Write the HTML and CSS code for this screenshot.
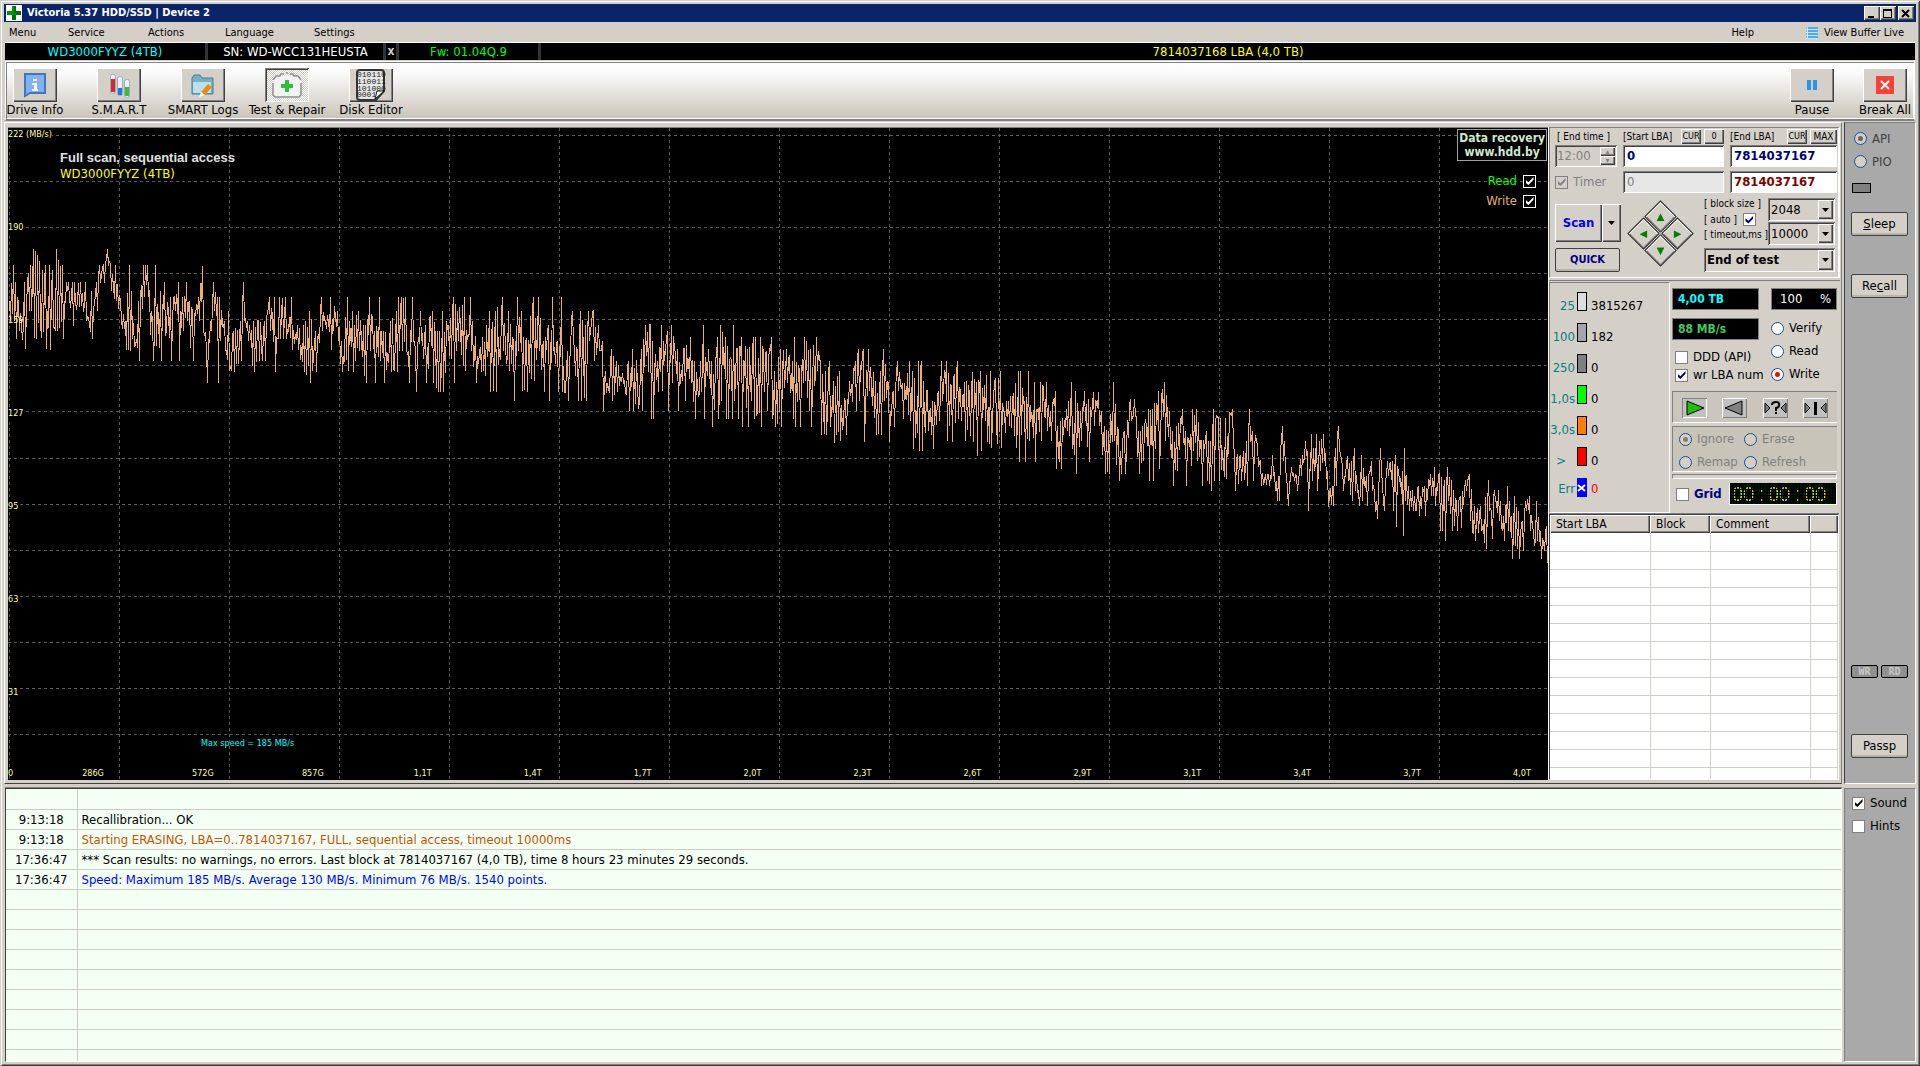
FILE: index.html
```html
<!DOCTYPE html>
<html lang="en">
<head>
<meta charset="utf-8">
<title>Victoria 5.37 HDD/SSD | Device 2</title>
<link rel="stylesheet" href="styles.css">
</head>
<body>
<div class="window">
  <header class="titlebar">
    <svg class="app-icon" viewBox="0 0 16 16"><rect width="16" height="16" fill="#fff"/><path d="M6 1h4v5h5v4h-5v5H6v-5H1V6h5z" fill="#009a00"/><path d="M8 1h2v5h5v2H8zM10 8h5v2h-5zM6 10h4v5H6z" fill="#007000"/></svg>
    <h1>Victoria 5.37 HDD/SSD | Device 2</h1>
    <div class="win-buttons">
      <button aria-label="Minimize"><svg viewBox="0 0 15 13"><path d="M4 9h6v2H4z"/></svg></button>
      <button aria-label="Maximize"><svg viewBox="0 0 15 13"><path d="M3 2h9v9H3zm1 2v6h7V4z" fill-rule="evenodd"/></svg></button>
      <button class="close" aria-label="Close"><svg viewBox="0 0 15 13"><path d="M4 3l7 7M11 3l-7 7" stroke="#000" stroke-width="2"/></svg></button>
    </div>
  </header>

  <nav class="menu">
    <a href="#">Menu</a><a href="#">Service</a><a href="#">Actions</a><a href="#">Language</a><a href="#">Settings</a>
    <a href="#" class="help">Help</a>
    <a href="#" class="live"><svg viewBox="0 0 12 12"><path d="M0 0h12v12H0z" fill="#cfe6fb"/><path d="M2 1h10M2 4h10M2 7h10M2 10h10" stroke="#2196f3" stroke-width="1.5"/><path d="M0 1h1M0 4h1M0 7h1M0 10h1" stroke="#2196f3"/></svg>View Buffer Live</a>
  </nav>

  <div class="device">
    <span class="model">WD3000FYYZ (4TB)</span>
    <span class="serial">SN: WD-WCC131HEUSTA</span>
    <button class="drop" aria-label="Hide serial">x</button>
    <span class="firmware">Fw: 01.04Q.9</span>
    <span class="lba">7814037168 LBA (4,0 TB)</span>
  </div>

  <div class="toolbar">
    <button class="tool"><span class="face"><svg viewBox="0 0 24 28"><path d="M2 3h20v19H7l-5 3z" fill="#7fb3f5" stroke="#4476bb" stroke-width="2"/><path d="M10 8h4v2h-4zM9 12h5v6h1v2H9v-2h2v-4H9z" fill="#f5f5f5"/></svg></span>Drive Info</button>
    <button class="tool"><span class="face"><svg viewBox="0 0 24 28"><g fill="#eef" stroke="#9ab" ><rect x="3.500" y="3.500" width="5" height="19" rx="2"/><rect x="10.500" y="5.500" width="5" height="19" rx="2"/><rect x="17.500" y="8.500" width="5" height="18" rx="2"/></g><path d="M4 8h4v13H4z" fill="#d42c22"/><path d="M11 17h4v7h-4z" fill="#2475e8"/><path d="M18 16h4v9h-4z" fill="#35c035"/></svg></span>S.M.A.R.T</button>
    <button class="tool"><span class="face"><svg viewBox="0 0 24 28"><path d="M1 7l2-3h6l2 3h11v16H1z" fill="#78afc5" stroke="#417d97"/><path d="M2 11h18v11H2z" fill="#bde0ec"/><path d="M17 13l4 3-7 8-4-3z" fill="#f48810"/><path d="M10 21l4 3-6 2z" fill="#fff"/></svg></span>SMART Logs</button>
    <button class="tool active"><span class="face"><svg class="wide" viewBox="0 0 30 28"><path d="M4 5h22l3 3v16l-2 2H3l-2-2V8z" fill="#f2f2f2"/><path d="M1 9l3-4h4l1-2h3M14 2h2M18 3h3l1 2h4l3 4M1 12v12l2 2h24l2-2V12" fill="none" stroke="#909090" stroke-width="1.500"/><path d="M13 9h4v4h4v4h-4v4h-4v-4H9v-4h4z" fill="#2ebd3d"/></svg></span>Test &amp; Repair</button>
    <button class="tool"><span class="face"><svg class="full" viewBox="0 0 30 32"><path d="M4 1h21q3 0 3 3v18l-8 9H4q-3 0-3-3V4q0-3 3-3z" fill="#e6e6e6" stroke="#333" stroke-width="2"/><path d="M28 22h-7l-2 8z" fill="#fff" stroke="#111"/><g font-family="Liberation Mono, monospace" font-size="8" fill="#222"><text x="1" y="8">010110</text><text x="1" y="15">110011</text><text x="1" y="22">101000</text><text x="1" y="28">0001</text></g></svg></span>Disk Editor</button>
    <button class="tool pause"><span class="face"><svg viewBox="0 0 24 28"><path d="M7 9h4v10H7zM13 9h4v10h-4z" fill="#2196f3"/></svg></span>Pause</button>
    <button class="tool"><span class="face"><svg viewBox="0 0 24 28"><path d="M3 5h18v18H3z" fill="#f44336"/><path d="M8 10l8 8M16 10l-8 8" stroke="#fff" stroke-width="2"/></svg></span>Break All</button>
  </div>

  <main class="middle">
    <div class="work">
      <section class="chart">
        <svg class="plot" viewBox="8 128 1540 651" preserveAspectRatio="none" aria-label="Speed graph"><g id="grid"></g><path id="trace"/></svg>
        <div class="y-axis"><span>222 (MB/s)</span><span>190</span><span>159</span><span>127</span><span>95</span><span>63</span><span>31</span></div>
        <span class="origin">0</span>
        <div class="x-axis"><span>286G</span><span>572G</span><span>857G</span><span>1,1T</span><span>1,4T</span><span>1,7T</span><span>2,0T</span><span>2,3T</span><span>2,6T</span><span>2,9T</span><span>3,1T</span><span>3,4T</span><span>3,7T</span><span>4,0T</span></div>
        <div class="caption"><strong>Full scan, sequential access</strong><span>WD3000FYYZ (4TB)</span></div>
        <span class="max">Max speed = 185 MB/s</span>
        <div class="overlay">
          <a href="#" class="banner">Data recovery<br>www.hdd.by</a>
          <label class="read">Read <input type="checkbox" checked></label>
          <label class="write">Write <input type="checkbox" checked></label>
        </div>
      </section>

      <aside class="controls">
        <section class="range">
          <div class="range-grid">
            <label class="small" for="endtime">[ End time ]</label>
            <div class="head"><label class="small" for="start">[Start LBA]</label><button class="mini">CUR</button><button class="mini">0</button></div>
            <div class="head"><label class="small" for="end">[End LBA]</label><button class="mini">CUR</button><button class="mini max-btn">MAX</button></div>
            <div class="spin"><input id="endtime" type="text" value="12:00" disabled><div><button disabled aria-label="Up">▴</button><button disabled aria-label="Down">▾</button></div></div>
            <input id="start" class="field" type="text" value="0">
            <input id="end" class="field" type="text" value="7814037167">
            <label class="check disabled"><input type="checkbox" checked disabled>Timer</label>
            <input class="field off" type="text" value="0" disabled aria-label="Current start">
            <input class="field red" type="text" value="7814037167" aria-label="Current end">
          </div>
          <div class="actions">
            <div class="scan-col">
              <div class="scan"><button>Scan</button><button class="arrow" aria-label="Scan options"></button></div>
              <button class="quick">QUICK</button>
            </div>
            <div class="diamond">
              <button aria-label="Up"><i class="up"></i></button><button aria-label="Right"><i class="right"></i></button><button aria-label="Left"><i class="left"></i></button><button aria-label="Down"><i class="down"></i></button>
            </div>
            <div class="options">
              <div class="block-labels">
                <label class="small" for="block">[ block size ]</label>
                <label class="small auto">[ auto ] <input type="checkbox" checked></label>
                <label class="small" for="timeout">[ timeout,ms ]</label>
              </div>
              <div class="block-values">
                <span class="combo"><select id="block"><option>2048</option></select></span>
                <span class="combo"><select id="timeout"><option>10000</option></select></span>
              </div>
              <span class="combo finish"><select aria-label="After scan"><option>End of test</option></select></span>
            </div>
          </div>
        </section>

        <section class="status">
          <dl class="legend">
            <div><dt>25</dt><dd><i class="b25"></i>3815267</dd></div>
            <div><dt>100</dt><dd><i class="b100"></i>182</dd></div>
            <div><dt>250</dt><dd><i class="b250"></i>0</dd></div>
            <div><dt>1,0s</dt><dd><i class="b1s"></i>0</dd></div>
            <div><dt>3,0s</dt><dd><i class="b3s"></i>0</dd></div>
            <div class="over"><dt>&gt;</dt><dd><i class="bover"></i>0</dd></div>
            <div class="err"><dt>Err</dt><dd><i class="berr"><svg viewBox="0 0 10 18"><path d="M1 7l7 6M8 7l-7 6" stroke="#fff" stroke-width="2"/></svg></i>0</dd></div>
          </dl>
          <div class="run">
            <div class="meters">
              <div class="left-col">
                <output class="lcd cyan">4,00 TB</output>
                <output class="lcd green">88 MB/s</output>
                <label class="check"><input type="checkbox">DDD (API)</label>
                <label class="check"><input type="checkbox" checked>wr LBA num</label>
              </div>
              <div class="right-col">
                <output class="lcd percent"><span>100</span><span>%</span></output>
                <label class="radio"><input type="radio" name="mode">Verify</label>
                <label class="radio"><input type="radio" name="mode">Read</label>
                <label class="radio"><input type="radio" name="mode" checked>Write</label>
              </div>
            </div>
            <div class="transport">
              <button class="on" aria-label="Forward"><svg viewBox="0 0 25 20"><path d="M5 3v14l17-7z" fill="#1fbf00" stroke="#000"/></svg></button>
              <button aria-label="Backward"><svg viewBox="0 0 25 20"><path d="M20 3v14L3 10z" fill="#808080" stroke="#000"/></svg></button>
              <button aria-label="Random"><svg viewBox="0 0 25 20"><path d="M2 5v10l5-5zM23 5v10l-5-5z" fill="#808080" stroke="#000"/><path d="M9 7q0-3 4-3t3 4q-1 2-3 2v3M13 14v2" fill="none" stroke="#000" stroke-width="2"/></svg></button>
              <button aria-label="Butterfly"><svg viewBox="0 0 25 20"><path d="M2 5v10l5-5zM23 5v10l-5-5z" fill="#808080" stroke="#000"/><path d="M11 4h3v13h-3z"/></svg></button>
            </div>
            <fieldset class="defects">
              <label class="radio"><input type="radio" name="defect" checked disabled>Ignore</label>
              <label class="radio"><input type="radio" name="defect" disabled>Erase</label>
              <label class="radio"><input type="radio" name="defect" disabled>Remap</label>
              <label class="radio"><input type="radio" name="defect" disabled>Refresh</label>
            </fieldset>
            <div class="rule"></div>
            <div class="grid-row">
              <label class="check"><input type="checkbox"><b>Grid</b></label>
              <time class="led"><span>00</span><span>:</span><span>00</span><span>:</span><span>00</span></time>
            </div>
          </div>
        </section>

        <div class="list">
          <table>
            <thead><tr><th>Start LBA</th><th>Block</th><th>Comment</th><th></th></tr></thead>
            <tbody>
              <tr><td></td><td></td><td></td><td></td></tr><tr><td></td><td></td><td></td><td></td></tr>
              <tr><td></td><td></td><td></td><td></td></tr><tr><td></td><td></td><td></td><td></td></tr>
              <tr><td></td><td></td><td></td><td></td></tr><tr><td></td><td></td><td></td><td></td></tr>
              <tr><td></td><td></td><td></td><td></td></tr><tr><td></td><td></td><td></td><td></td></tr>
              <tr><td></td><td></td><td></td><td></td></tr><tr><td></td><td></td><td></td><td></td></tr>
              <tr><td></td><td></td><td></td><td></td></tr><tr><td></td><td></td><td></td><td></td></tr>
              <tr><td></td><td></td><td></td><td></td></tr><tr><td></td><td></td><td></td><td></td></tr>
            </tbody>
          </table>
        </div>
      </aside>
    </div>

    <aside class="side">
      <label class="radio"><input type="radio" name="bus" checked disabled>API</label>
      <label class="radio"><input type="radio" name="bus" disabled>PIO</label>
      <i class="lamp"></i>
      <button class="push sleep"><u>S</u>leep</button>
      <button class="push recall">Re<u>c</u>all</button>
      <div class="lamps"><span>WR</span><span>RD</span></div>
      <button class="push">Passp</button>
    </aside>
  </main>

  <footer class="bottom">
    <div class="log">
      <table>
        <tbody>
          <tr><td></td><td></td></tr>
          <tr><td>9:13:18</td><td>Recallibration... OK</td></tr>
          <tr class="start"><td>9:13:18</td><td>Starting ERASING, LBA=0..7814037167, FULL, sequential access, timeout 10000ms</td></tr>
          <tr><td>17:36:47</td><td>*** Scan results: no warnings, no errors. Last block at 7814037167 (4,0 TB), time 8 hours 23 minutes 29 seconds.</td></tr>
          <tr class="speed"><td>17:36:47</td><td>Speed: Maximum 185 MB/s. Average 130 MB/s. Minimum 76 MB/s. 1540 points.</td></tr>
          <tr><td></td><td></td></tr><tr><td></td><td></td></tr><tr><td></td><td></td></tr>
          <tr><td></td><td></td></tr><tr><td></td><td></td></tr><tr><td></td><td></td></tr>
          <tr><td></td><td></td></tr><tr><td></td><td></td></tr><tr><td></td><td></td></tr>
        </tbody>
      </table>
    </div>
    <div class="prefs">
      <label class="check"><input type="checkbox" checked>Sound</label>
      <label class="check"><input type="checkbox">Hints</label>
    </div>
  </footer>
</div>
<script src="chart.js"></script>
</body>
</html>
```
FILE: styles.css
```css
* { box-sizing: border-box; }
:root {
  --face: #d4d0c8;
  --shade: #808080;
  --dark: #404040;
  --raised: inset 1px 1px #fff, inset -1px -1px var(--dark), inset -2px -2px var(--shade);
  --sunken: inset 1px 1px var(--shade), inset -1px -1px #fff, inset 2px 2px var(--dark);
}
body {
  margin: 0;
  background: var(--face);
  color: #000;
  font: 13px/16px "DejaVu Sans Condensed", "DejaVu Sans", sans-serif;
  font-stretch: condensed;
}
button, input, select {
  margin: 0;
  padding: 0;
  border: 0;
  border-radius: 0;
  background: none;
  color: inherit;
  font: inherit;
}
button { background: var(--face); box-shadow: var(--raised); white-space: nowrap; }
a { color: inherit; text-decoration: none; }
svg { display: block; }

.window {
  min-height: 100vh;
  display: flex;
  flex-direction: column;
  padding: 4px;
  box-shadow: inset 1px 1px var(--face), inset -1px -1px var(--dark), inset 2px 2px #fff, inset -2px -2px var(--shade);
}

.titlebar { display: flex; align-items: center; height: 18px; padding: 0 2px; background: #0a246a; color: #fff; }
.titlebar h1 { margin: 0 auto 0 5px; font-size: 11px; line-height: 16px; font-weight: 700; }
.app-icon { width: 16px; height: 16px; }
.win-buttons { display: flex; }
.win-buttons button { width: 16px; height: 14px; }
.win-buttons .close { margin-left: 2px; }
.win-buttons svg { width: 15px; height: 13px; }

.menu { display: flex; align-items: center; height: 20px; padding: 1px 12px 0 5px; font-size: 11px; }
.menu a { width: 82px; }
.menu a:first-child { width: 59px; }
.menu a:nth-child(2) { width: 80px; }
.menu a:nth-child(3) { width: 77px; }
.menu a:nth-child(4) { width: 89px; }
.menu .help { width: auto; margin-left: auto; margin-right: 52px; }
.menu .live { display: flex; align-items: center; gap: 6px; width: auto; }
.menu svg { width: 12px; height: 12px; }

.device { display: flex; height: 18px; margin: 0 1px; border-top: 1px solid #fff; background: #000; line-height: 17px; text-align: center; }
.device span, .device button { border-right: 3px solid #333; }
.model { width: 203px; color: #0ff; }
.serial { width: 178px; color: #fff; }
.device .drop { width: 13px; background: #000; box-shadow: none; color: #ccc; font-weight: 700; font-size: 12px; }
.firmware { width: 142px; color: #0f0; }
.device .lba { flex: 1; border: 0; color: #ff0; }

.toolbar {
  display: flex;
  gap: 26px;
  height: 60px;
  margin: 1px 1px 0;
  padding: 6px 0 0 8px;
  border: 1px solid #fff;
  border-bottom: 2px solid var(--shade);
  background: linear-gradient(#fff, #fafafa 20%, #c8c4b8);
  box-shadow: inset 1px 1px var(--shade), inset -1px -1px #fff;
}
.tool { display: flex; flex-direction: column; align-items: center; width: 60px; margin: 0 -1px; padding: 0; background: none; box-shadow: none; }
.toolbar .tool:first-child { margin-left: -9px; }
.tool .face { display: flex; align-items: center; justify-content: center; width: 44px; height: 34px; background: var(--face); box-shadow: var(--raised); }
.tool.active .face { background: repeating-conic-gradient(#fff 0 25%, var(--face) 0 50%) 0 0 / 2px 2px; box-shadow: var(--sunken); }
.tool svg { width: 24px; height: 28px; }
.tool svg.wide { width: 30px; }
.tool svg.full { width: 30px; height: 32px; }
.tool.pause { margin-left: auto; margin-right: -12px; }

.middle { flex: 1; display: flex; gap: 2px; margin-top: 1px; min-height: 640px; }
.work {
  flex: 1;
  display: flex;
  min-width: 0;
  padding: 4px 1px 3px 3px;
  border: 1px solid #fff;
  border-bottom-color: var(--dark);
  border-right-color: var(--shade);
}

.chart { position: relative; flex: 1; min-width: 0; border-top: 1px solid var(--shade); background: #000; font-size: 9px; line-height: 12px; color: #ffffa0; }
.plot { position: absolute; inset: 0; width: 100%; height: 100%; }
.plot line { stroke: #5a5a5a; stroke-dasharray: 3 3; vector-effect: non-scaling-stroke; shape-rendering: crispEdges; }
#trace { fill: none; stroke: #e8ae72; vector-effect: non-scaling-stroke; shape-rendering: crispEdges; }
.y-axis { position: absolute; top: 0; left: 0; height: 87.5%; display: flex; flex-direction: column; justify-content: space-between; align-items: flex-start; }
.y-axis span { background: #000; }
.y-axis span:nth-child(3) { background: none; }
.origin { position: absolute; left: 0; bottom: 1px; }
.x-axis { position: absolute; left: 67px; right: 8px; bottom: 1px; display: flex; justify-content: space-between; text-align: center; }
.x-axis span { width: 36px; }
.caption { position: absolute; left: 52px; top: 22px; display: grid; color: #ff0; font-size: 13px; line-height: 16px; }
.caption strong { color: #e0e0e0; font-family: "Liberation Sans", sans-serif; }
.max { position: absolute; left: 193px; bottom: 31px; color: #0ff; }
.overlay { position: absolute; top: 1px; right: 1px; display: flex; flex-direction: column; align-items: flex-end; color: #0f0; font-size: 13px; }
.banner { margin-bottom: 10px; padding: 1px 1px; border: 1px solid #a0a0a0; background: #000; color: #cfe8cf; font-size: 12px; line-height: 14px; font-weight: 700; text-align: center; }
.overlay label { display: flex; gap: 6px; align-items: center; height: 20px; margin-right: 11px; }
.overlay .write { color: #e8ae72; }

input[type=checkbox] {
  appearance: none;
  flex: none;
  display: grid;
  place-items: center;
  width: 13px;
  height: 13px;
  background: #fff;
  color: #000080;
  border: 1px solid var(--shade);
}
input[type=checkbox]:checked::before { content: ""; width: 8px; height: 8px; background: currentColor; clip-path: polygon(0 35%, 37% 65%, 100% 0, 100% 35%, 37% 100%, 0 72%); }
input[type=checkbox]:disabled { background: none; color: var(--shade); }
.overlay input[type=checkbox] { border-color: #fff; background: #000; color: #fff; }
.prefs input[type=checkbox] { color: #000; }
input[type=radio] { appearance: none; flex: none; display: grid; place-items: center; width: 13px; height: 13px; border: 1px solid #1c4f86; border-radius: 50%; background: #fff; }
input[type=radio]:checked::before { content: ""; width: 5px; height: 5px; border-radius: 50%; background: #f00; }
input[type=radio]:disabled { background: var(--face); }
input[type=radio]:disabled::before { background: var(--shade); }
.check, .radio { display: flex; align-items: center; gap: 5px; white-space: nowrap; }
.disabled { color: var(--shade); }

.controls { display: flex; flex-direction: column; width: 292px; border-left: 1px solid #fff; }
.small { font-size: 10px; line-height: 12px; white-space: nowrap; }
.range { height: 151px; padding: 1px 3px 0 5px; border: 1px solid var(--shade); border-right: 2px solid #fff; border-bottom-color: #fff; box-shadow: 0 2px var(--face), 0 3px var(--shade); }
.range-grid { display: grid; grid-template-columns: 62px 101px 107px; grid-template-rows: 15px 24px 28px; column-gap: 6px; align-items: center; }
.range-grid > label.small { padding-left: 2px; }
.head { display: flex; align-items: center; gap: 3px; height: 15px; }
.head label { margin-right: auto; }
.mini { width: 20px; height: 15px; font-size: 9px; line-height: 15px; overflow: hidden; }
.max-btn { width: 27px; font-size: 10px; }
.field { width: 100%; height: 22px; padding: 0 4px 2px; background: #fff; box-shadow: var(--sunken); color: #000080; font-weight: 700; line-height: 18px; }
.field.red { color: #800000; }
.field.off { background: #e6e6e6; color: var(--shade); font-weight: 400; }
.spin { display: flex; height: 22px; padding: 2px; box-shadow: var(--sunken); color: var(--shade); }
.spin input { flex: 1; min-width: 0; }
.spin button { display: block; width: 15px; height: 9px; font-size: 8px; line-height: 8px; }

.actions { display: flex; justify-content: space-between; padding-top: 2px; }
.scan-col { display: flex; flex-direction: column; gap: 6px; padding-top: 6px; }
.scan { display: flex; height: 38px; color: #00f; font-weight: 700; }
.scan button:first-child { width: 47px; }
.scan .arrow { width: 19px; display: grid; place-items: center; }
.arrow::before, .combo::after { content: ""; background: #000; clip-path: polygon(0 0, 100% 0, 50% 100%); width: 7px; height: 4px; }
.quick { width: 65px; height: 24px; border: 1px solid var(--dark); border-radius: 2px; box-shadow: inset 0 -2px #b8b4a4; color: #000080; font-size: 11px; font-weight: 700; }
.diamond { display: grid; grid-template-columns: 23px 23px; gap: 1px; width: 47px; height: 47px; margin: 12px 6px 0 2px; transform: rotate(45deg); }
.diamond button { display: grid; place-items: center; border: 1px solid #222; box-shadow: inset 1px 1px #fff, inset -1px -1px var(--shade); }
.diamond i { width: 8px; height: 8px; background: #008000; clip-path: polygon(50% 0, 100% 100%, 0 100%); transform: rotate(-45deg); }
.diamond .right { transform: rotate(45deg); }
.diamond .left { transform: rotate(225deg); }
.diamond .down { transform: rotate(135deg); }
.options { display: grid; grid-template-columns: 64px 67px; grid-template-rows: 47px 24px; row-gap: 3px; }
.block-labels { display: flex; flex-direction: column; gap: 2px; }
.auto { display: flex; align-items: center; gap: 6px; height: 15px; }
.block-values { display: grid; gap: 1px; }
.combo { position: relative; display: block; background: var(--face); box-shadow: var(--sunken); }
.combo select { appearance: none; width: 100%; height: 23px; padding-left: 3px; }
.combo::before { content: ""; position: absolute; right: 2px; top: 2px; bottom: 2px; width: 15px; background: var(--face); box-shadow: var(--raised); pointer-events: none; }
.combo::after { position: absolute; right: 6px; top: 10px; pointer-events: none; }
.finish { grid-column: span 2; font-weight: 700; }

.status { display: flex; height: 235px; padding-top: 4px; }
.legend { display: flex; flex-direction: column; width: 121px; margin: 0; padding-top: 5px; border: 1px solid var(--shade); border-right-color: #fff; border-bottom-color: #fff; }
.legend div { display: flex; align-items: flex-end; gap: 2px; height: 31px; padding-bottom: 5px; }
.legend .err { padding-bottom: 8px; }
.legend dt { width: 25px; text-align: right; color: #008080; }
.legend .over dt { padding-right: 9px; }
.legend dd { display: flex; align-items: flex-end; gap: 4px; margin: 0; }
.legend i { width: 10px; height: 19px; margin-bottom: 3px; border: 1px solid #000; }
.b25 { background: #ddd; }
.b100 { background: #a4a4ac; }
.b250 { background: #808080; }
.b1s { background: #0f0; }
.b3s { background: #ff8000; }
.bover { background: #f00; }
.legend .berr { margin-bottom: 0; background: #00f; border: 0; }
.err dd { color: #f00; }

.run { flex: 1; padding: 6px 3px 0 2px; }
.meters { display: flex; justify-content: space-between; height: 103px; }
.left-col { display: flex; flex-direction: column; width: 87px; }
.right-col { display: flex; flex-direction: column; width: 66px; gap: 7px; }
.lcd { height: 22px; padding: 0 5px; border: 1px solid var(--shade); background: #000; line-height: 20px; font-size: 12px; font-weight: 700; }
.lcd.cyan { color: #0ff; margin-bottom: 8px; }
.lcd.green { color: #40c860; margin-bottom: 8px; }
.lcd.percent { display: flex; justify-content: space-between; margin-bottom: 3px; padding-left: 8px; color: #fff; font-size: 13px; font-weight: 400; }
.left-col .check { height: 18px; padding-left: 3px; }
.transport { display: flex; justify-content: space-between; height: 32px; padding: 6px 9px; border: 1px solid var(--shade); border-right: 0; border-bottom-color: #fff; background: #cac6bc; }
.transport button { width: 25px; height: 20px; background: #c0c0c0; box-shadow: inset 1px 1px #fff, inset -1px -1px var(--shade); }
.transport .on { box-shadow: inset 1px 1px var(--shade), inset -1px -1px #fff; }
.transport svg { width: 25px; height: 20px; }
.defects { display: grid; grid-template-columns: 65px 1fr; gap: 7px 0; height: 46px; margin: 3px 0 2px; padding: 4px 6px; border: 1px solid var(--shade); border-right: 0; border-bottom-color: #fff; background: #c8c4ba; color: var(--shade); }
.rule { height: 5px; border: 1px solid #fff; border-top-color: var(--shade); border-left-color: var(--shade); }
.grid-row { display: flex; justify-content: space-between; align-items: center; padding: 4px 0 0 4px; color: #000080; }
.led { position: relative; display: flex; width: 108px; height: 22px; padding-left: 2px; border: 1px solid #fff; border-top: 0; background: #001400; color: #d0d020; font: 20px/22px "Liberation Sans", sans-serif; }
.led span { width: 22px; text-align: center; }
.led span:nth-child(even) { width: 14px; }
.led::after { content: ""; position: absolute; inset: 0; background: linear-gradient(#000 1px, transparent 1px) 0 0 / 3px 3px, linear-gradient(90deg, #000 1px, transparent 1px) 0 0 / 3px 3px; }

.list { flex: 1 1 200px; height: 0; min-height: 0; margin-top: 1px; margin-right: 1px; overflow: hidden; background: #fff; border: 1px solid var(--dark); border-right-color: #fff; border-bottom-color: #fff; box-shadow: 0 -1px var(--shade); }
table { width: 100%; border-collapse: collapse; table-layout: fixed; }
.list th { width: 100px; height: 18px; padding: 0 6px; background: var(--face); box-shadow: var(--raised); font-size: 12px; font-weight: 400; text-align: left; }
.list th:nth-child(2) { width: 60px; }
.list th:nth-child(4) { width: auto; }
.list td { height: 18px; padding: 0; border-right: 1px solid #d0d0c8; border-bottom: 1px solid #d0d0c8; }

.side { display: flex; flex-direction: column; width: 72px; padding: 4px 7px 25px 6px; border: 1px solid #fff; border-top-color: var(--shade); border-left-color: var(--dark); background: #a9a9a9; }
.side .radio { height: 23px; padding-left: 3px; color: var(--dark); }
.side input:disabled::before { background: #666; }
.lamp { width: 19px; height: 10px; margin: 10px 0 19px 1px; border: 1px solid #000; background: #808080; }
.push { height: 24px; border: 1px solid var(--dark); border-radius: 2px; box-shadow: inset 0 -2px #b8b4a4; }
.recall { margin: 38px 0 auto; }
.lamps { display: flex; justify-content: space-between; margin-bottom: 56px; }
.lamps span { width: 27px; height: 13px; border: 1px solid #000; border-radius: 2px; background: #909090; color: #c8c8c8; font: bold 10px/11px "DejaVu Sans Mono", monospace; text-align: center; }

.bottom { display: flex; gap: 2px; height: 274px; margin: 4px 0 0 1px; }
.log { flex: 1; overflow: hidden; border: 1px solid var(--dark); border-right-color: #fff; border-bottom-color: #fff; box-shadow: 0 -1px var(--shade); background: #f3fff3; }
.log td { height: 20px; padding: 2px 4px 0; border-bottom: 1px solid #ccccc4; line-height: 16px; white-space: nowrap; }
.log td:first-child { width: 71px; padding: 2px 0 0; border-right: 1px solid #ccccc4; text-align: center; }
.start td + td { color: #c85000; }
.speed td + td { color: #00f; }
.prefs { display: flex; flex-direction: column; gap: 7px; width: 72px; padding: 6px 8px 6px 7px; border: 1px solid #fff; border-top-color: var(--shade); border-left-color: var(--shade); background: #a9a9a9; }
```
FILE: chart.js
```js
// Speed trace samples: position, upper level and lower level of each burst.
const bursts = `9 300 320,13 264 320,15 281 338,24 281 348,30 264 310,33 248 337,35 250 338,45 264 348,49 264 349,56 248 330,62 264 338,66 281 290,72 281 325,80 281 305,85 281 320,91 290 338,96 281 310,99 264 282,103 264 282,107 248 265,110 264 290,115 264 300,120 300 320,125 320 349,129 264 350,131 290 338,138 300 360,143 264 296,147 264 296,152 320 360,155 264 345,160 290 360,164 281 335,170 296 360,174 296 310,178 281 360,182 296 330,186 281 320,192 310 360,198 296 320,202 265 330,206 350 382,210 320 330,213 281 310,217 296 382,219 296 340,224 320 350,228 310 370,233 330 371,240 320 360,243 281 320,247 320 340,253 320 371,258 320 360,264 320 360,269 296 330,274 296 371,279 296 338,285 296 338,291 296 349,297 324 349,303 324 371,309 310 382,315 330 371,321 296 330,330 296 349,337 310 340,341 340 371,347 296 370,352 310 371,358 310 350,365 324 382,369 296 350,374 330 382,379 296 360,383 330 382,390 320 371,396 310 371,398 296 350,405 296 350,408 350 382,412 296 340,415 350 391,420 310 340,425 324 382,432 310 382,437 330 391,442 310 391,448 324 355,453 296 382,457 310 340,464 296 370,470 296 350,475 335 382,482 336 370,489 310 391,495 310 391,502 296 350,508 310 370,513 340 400,517 296 350,521 310 390,526 337 391,533 296 380,538 296 350,543 340 391,548 324 400,552 296 350,557 340 391,561 296 391,567 350 400,572 310 340,577 350 400,580 310 400,585 324 400,588 310 340,593 310 360,598 324 350,602 340 410,605 370 392,611 348 400,616 360 391,622 372 382,628 360 410,632 348 410,641 348 410,645 324 355,650 324 418,652 340 418,657 360 391,661 324 390,667 330 410,671 324 382,677 348 410,684 348 400,690 336 382,694 360 418,700 360 391,703 324 418,708 348 370,711 360 426,717 336 418,720 324 400,725 336 418,731 360 418,733 324 400,737 348 418,741 336 426,747 348 426,753 336 418,760 336 426,766 350 410,771 336 418,774 370 426,780 348 426,786 348 382,792 360 418,794 336 426,799 370 426,804 336 380,810 348 426,816 336 370,820 360 434,825 370 434,829 360 426,833 380 442,839 370 440,845 400 434,849 380 395,855 360 410,858 348 400,863 348 441,868 348 390,875 380 434,880 370 434,883 348 400,888 382 441,893 390 426,897 360 390,902 382 418,909 360 420,912 370 448,918 360 450,921 360 450,927 390 430,932 400 448,938 390 420,941 360 400,946 360 440,951 385 441,957 360 418,960 391 420,964 381 440,972 371 441,976 381 455,980 370 450,990 370 447,1000 370 447,1008 400 425,1015 382 447,1018 370 461,1020 370 434,1024 400 461,1028 370 440,1034 381 461,1040 381 440,1046 381 430,1050 410 440,1055 390 468,1060 420 468,1066 408 430,1071 381 448,1075 390 473,1080 410 440,1084 390 420,1088 398 461,1093 391 425,1098 391 425,1104 425 473,1108 430 473,1113 381 440,1118 430 480,1124 430 473,1130 398 420,1134 398 415,1138 430 473,1142 425 460,1148 408 480,1152 408 480,1158 390 468,1164 381 440,1169 410 440,1172 430 485,1176 425 470,1182 408 440,1185 430 485,1190 433 465,1192 408 450,1196 408 460,1201 440 485,1206 430 480,1210 440 490,1213 408 480,1218 417 480,1225 417 478,1232 408 445,1234 450 490,1240 454 480,1246 440 485,1249 408 440,1252 430 480,1255 434 440,1260 460 485,1265 473 484,1268 473 485,1272 454 475,1276 480 500,1278 475 500,1282 425 460,1284 440 470,1287 490 505,1291 466 475,1296 475 490,1300 458 475,1305 440 455,1307 450 510,1311 433 480,1316 433 490,1319 440 470,1323 433 460,1327 470 506,1332 485 505,1335 447 485,1338 425 450,1342 465 490,1347 455 480,1351 460 500,1354 447 490,1358 490 505,1361 454 500,1366 475 505,1371 460 490,1376 500 518,1380 447 470,1383 500 510,1387 460 475,1392 460 510,1395 454 526,1398 470 480,1402 470 535,1404 447 500,1408 485 510,1412 489 510,1418 485 515,1424 485 515,1430 473 495,1434 466 505,1439 473 530,1444 479 540,1447 466 500,1451 479 530,1456 500 530,1460 495 527,1465 479 490,1469 473 520,1474 505 540,1480 505 530,1485 496 548,1488 479 510,1491 510 538,1494 489 500,1498 489 520,1503 515 540,1507 485 530,1511 515 558,1514 495 545,1518 510 558,1522 520 550,1525 500 510,1529 495 530,1533 530 545,1536 500 540,1540 530 558,1543 540 550,1546 525 562`
  .split(',').map(s => s.split(' ').map(Number));

// Small repeatable generator that varies the samples inside each burst.
let seed = 7;
const rand = () => (seed = (seed * 16807) % 2147483647) / 2147483647;

const points = [];
bursts.forEach(([x, top, low], i) => {
  points.push([x, top], [x + 1, low]);
  const next = bursts[i + 1];
  if (!next) return;
  let high = true;
  for (let px = x + 2; px < next[0]; px += 1) {
    const t = (px - x) / (next[0] - x);
    const a = top + (next[1] - top) * t;
    const b = low + (next[2] - low) * t;
    const pull = rand() * rand();
    points.push([px, high ? a + (b - a) * pull : b - (b - a) * pull]);
    if (rand() < 0.65) high = !high;
  }
});
// Samples sit on pixel centres so that each burst stays one pixel wide.
document.getElementById('trace').setAttribute('d',
  'M' + points.map(p => (p[0] + 0.5) + ' ' + (Math.round(p[1]) + 0.5)).join('L'));

const grid = document.getElementById('grid');
const line = (x1, y1, x2, y2) => {
  const el = document.createElementNS('http://www.w3.org/2000/svg', 'line');
  Object.entries({ x1, y1, x2, y2 }).forEach(([k, v]) => el.setAttribute(k, v));
  grid.append(el);
};
for (let x = 9.5; x < 1548; x += 110) line(x, 128, x, 779);
for (let y = 135.5; y < 779; y += 46) line(8, y, 1548, y);
```
